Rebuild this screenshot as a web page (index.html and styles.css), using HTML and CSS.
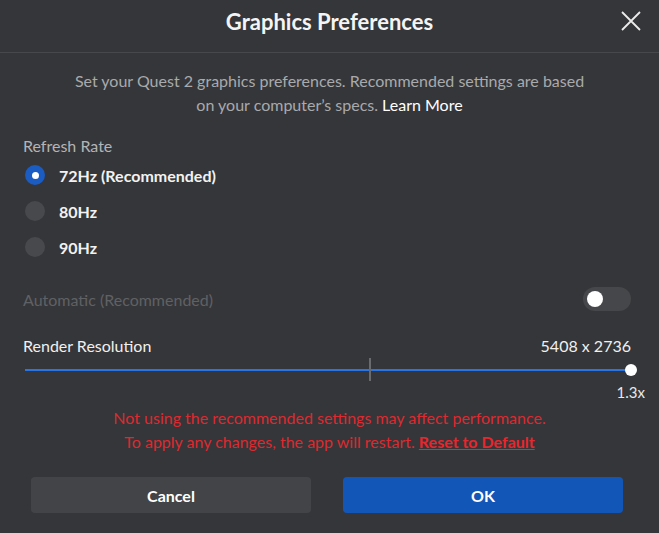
FILE: index.html
```html
<!DOCTYPE html>
<html lang="en">
<head>
    <meta charset="UTF-8">
    <meta name="viewport" content="width=device-width, initial-scale=1.0">
    <title>Graphics Preferences</title>
    <link rel="stylesheet" href="styles.css">
</head>
<body>
    <div class="dialog">
        <div class="header">
            <span></span>
            <h1>Graphics Preferences</h1>
            <button class="close" aria-label="Close">
                <svg width="20" height="20" viewBox="0 0 20 20">
                    <path d="M1 1 L19 19 M19 1 L1 19" stroke="#ececec" stroke-width="1.8" fill="none"/>
                </svg>
            </button>
        </div>

        <p class="intro">Set your Quest 2 graphics preferences. Recommended settings are based<br>on your computer’s specs. <a href="#">Learn More</a></p>

        <div class="section">
            <div class="label">Refresh Rate</div>
            <div class="radio-row"><span class="radio checked"></span>72Hz (Recommended)</div>
            <div class="radio-row"><span class="radio"></span>80Hz</div>
            <div class="radio-row"><span class="radio"></span>90Hz</div>

            <div class="auto-row">
                <span class="dim">Automatic (Recommended)</span>
                <span class="toggle"><span class="knob"></span></span>
            </div>

            <div class="res-row">
                <span>Render Resolution</span>
                <span>5408 x 2736</span>
            </div>
            <div class="slider">
                <div class="track"></div>
                <div class="tick"></div>
                <div class="thumb"></div>
            </div>
            <div class="scale">1.3x</div>
        </div>

        <p class="warning">Not using the recommended settings may affect performance.<br>To apply any changes, the app will restart. <a href="#">Reset to Default</a></p>

        <div class="buttons">
            <button class="btn cancel">Cancel</button>
            <button class="btn ok">OK</button>
        </div>
    </div>
</body>
</html>
```

FILE: styles.css
```css
body {
    margin: 0;
    background-color: #353639;
    font-family: Lato, "Liberation Sans", sans-serif;
    color: #ffffff;
}
.dialog {
    width: 659px;
    height: 533px;
    display: flex;
    flex-direction: column;
}
.header {
    height: 53px;
    box-sizing: border-box;
    padding-bottom: 9px;
    border-bottom: 1px solid #47484b;
    display: grid;
    grid-template-columns: 1fr auto 1fr;
    align-items: center;
}
.header h1 {
    margin: 0;
    font-size: 22px;
    font-weight: 700;
    color: #f4f4f4;
}
.close {
    justify-self: end;
    margin: 0 18px 2px 0;
    background: none;
    border: none;
    padding: 0;
    width: 20px;
    height: 20px;
    cursor: pointer;
}
.intro {
    margin: 16px 0 0;
    text-align: center;
    font-size: 16px;
    line-height: 24px;
    color: #a9aaac;
}
.intro a {
    color: #ffffff;
    text-decoration: none;
}
.section {
    padding: 0 28px 0 23px;
    display: flex;
    flex-direction: column;
}
.label {
    margin-top: 18px;
    font-size: 16px;
    line-height: 22px;
    color: #b3b4b6;
}
.radio-row {
    height: 36px;
    display: flex;
    align-items: center;
    font-size: 16px;
    font-weight: 700;
    color: #f2f2f2;
    gap: 14px;
    padding-left: 2px;
}
.radio {
    width: 20px;
    height: 20px;
    border-radius: 50%;
    background-color: #48494c;
    display: flex;
    align-items: center;
    justify-content: center;
}
.radio.checked {
    background-color: #1a5cc1;
}
.radio.checked::after {
    content: "";
    width: 7px;
    height: 7px;
    border-radius: 50%;
    background-color: #ffffff;
}
.auto-row {
    margin-top: 22px;
    height: 24px;
    display: flex;
    align-items: center;
    justify-content: space-between;
    font-size: 16px;
}
.dim {
    color: #606164;
}
.toggle {
    width: 48px;
    height: 24px;
    border-radius: 12px;
    background-color: #46474a;
    display: flex;
    align-items: center;
    padding-left: 4px;
    box-sizing: border-box;
}
.knob {
    width: 16px;
    height: 16px;
    border-radius: 50%;
    background-color: #ffffff;
}
.res-row {
    margin-top: 24px;
    display: flex;
    justify-content: space-between;
    font-size: 16px;
    line-height: 22px;
    color: #f0f0f0;
}
.slider {
    position: relative;
    height: 24px;
    margin: 1px 0 0 2px;
}
.track {
    position: absolute;
    left: 0;
    right: 0;
    top: 11px;
    height: 2px;
    background-color: #2b74e4;
}
.tick {
    position: absolute;
    left: 344px;
    top: 0;
    width: 2px;
    height: 23px;
    background-color: #6a6b6e;
}
.thumb {
    position: absolute;
    right: -6px;
    top: 6px;
    width: 12px;
    height: 12px;
    border-radius: 50%;
    background-color: #ffffff;
}
.scale {
    align-self: flex-end;
    margin-right: -14px;
    font-size: 15px;
    line-height: 20px;
    color: #e8e8e8;
}
.warning {
    margin: 4px 0 0;
    text-align: center;
    font-size: 16px;
    line-height: 24px;
    color: #dd2a30;
}
.warning a {
    color: #e8262d;
    font-weight: 700;
    text-decoration: underline;
}
.buttons {
    margin-top: 23px;
    padding: 0 36px 0 31px;
    display: flex;
    gap: 32px;
}
.btn {
    flex: 1;
    height: 36px;
    border: none;
    border-radius: 4px;
    font-family: Lato, "Liberation Sans", sans-serif;
    font-size: 16px;
    font-weight: 700;
    color: #ffffff;
    cursor: pointer;
}
.cancel {
    background-color: #434447;
}
.ok {
    background-color: #1257b8;
}
```
